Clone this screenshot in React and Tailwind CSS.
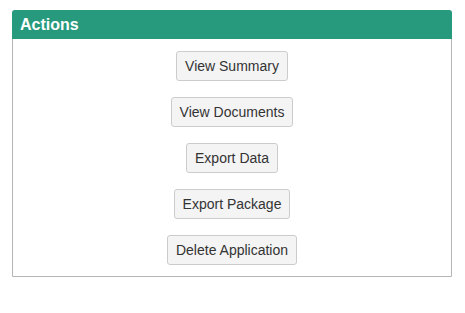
export default function App() {
  const actions = ['View Summary', 'View Documents', 'Export Data', 'Export Package', 'Delete Application']
  return (
    <div className="w-[465px] h-[313px] bg-white pt-[10px] pl-[12px]" style={{ fontFamily: '"Liberation Sans", Arial, sans-serif' }}>
      <div className="w-[440px] border border-[#b5b5b5] rounded-t-[3px]">
        <div className="h-[29px] -mt-px -mx-px bg-[#279a7e] rounded-t-[3px] px-[8px] flex items-center">
          <h3 className="text-white font-bold text-[16px]">Actions</h3>
        </div>
        <div className="flex flex-col items-center gap-[16px] pt-[12px] pb-[11px]">
          {actions.map(a => (
            <button key={a} className="h-[30px] px-[8px] text-[14px] text-[#333] bg-[#f4f4f4] border border-[#cccccc] rounded-[3px]">
              {a}
            </button>
          ))}
        </div>
      </div>
    </div>
  )
}
